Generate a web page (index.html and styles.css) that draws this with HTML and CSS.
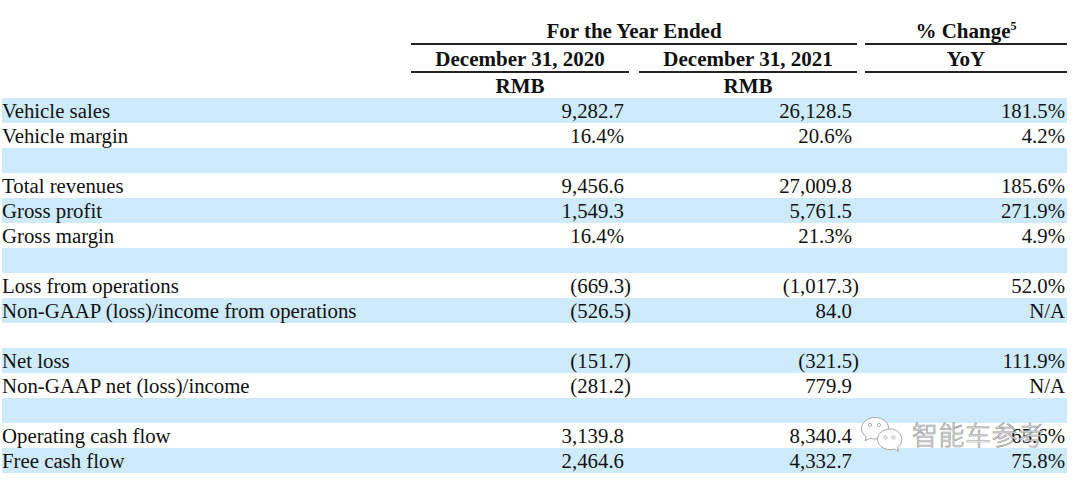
FILE: index.html
```html
<!DOCTYPE html>
<html>
<head>
<meta charset="utf-8">
<link rel="stylesheet" href="styles.css">
</head>
<body>
<div class="page">
  <div class="table">
    <div class="hrow h1">
      <div class="lab"></div>
      <div class="hc span2 ruled">For the Year Ended</div>
      <div class="gap2"></div>
      <div class="hc c3 ruled">% Change<sup>5</sup></div>
    </div>
    <div class="hrow h2">
      <div class="lab"></div>
      <div class="hc c1 ruled">December 31, 2020</div>
      <div class="gap1"></div>
      <div class="hc c2 ruled">December 31, 2021</div>
      <div class="gap2"></div>
      <div class="hc c3 ruled">YoY</div>
    </div>
    <div class="hrow h3">
      <div class="lab"></div>
      <div class="hc c1">RMB</div>
      <div class="gap1"></div>
      <div class="hc c2">RMB</div>
      <div class="gap2"></div>
      <div class="hc c3"></div>
    </div>
    <div class="rows">
      <div class="row"><div class="lab">Vehicle sales</div><div class="num c1">9,282.7</div><div class="gap1"></div><div class="num c2">26,128.5</div><div class="gap2"></div><div class="num c3">181.5%</div></div>
      <div class="row"><div class="lab">Vehicle margin</div><div class="num c1">16.4%</div><div class="gap1"></div><div class="num c2">20.6%</div><div class="gap2"></div><div class="num c3">4.2%</div></div>
      <div class="row"><div class="lab"></div></div>
      <div class="row"><div class="lab">Total revenues</div><div class="num c1">9,456.6</div><div class="gap1"></div><div class="num c2">27,009.8</div><div class="gap2"></div><div class="num c3">185.6%</div></div>
      <div class="row"><div class="lab">Gross profit</div><div class="num c1">1,549.3</div><div class="gap1"></div><div class="num c2">5,761.5</div><div class="gap2"></div><div class="num c3">271.9%</div></div>
      <div class="row"><div class="lab">Gross margin</div><div class="num c1">16.4%</div><div class="gap1"></div><div class="num c2">21.3%</div><div class="gap2"></div><div class="num c3">4.9%</div></div>
      <div class="row"><div class="lab"></div></div>
      <div class="row"><div class="lab">Loss from operations</div><div class="num c1">(669.3<span class="cp">)</span></div><div class="gap1"></div><div class="num c2">(1,017.3<span class="cp">)</span></div><div class="gap2"></div><div class="num c3">52.0%</div></div>
      <div class="row"><div class="lab">Non-GAAP (loss)/income from operations</div><div class="num c1">(526.5<span class="cp">)</span></div><div class="gap1"></div><div class="num c2">84.0</div><div class="gap2"></div><div class="num c3">N/A</div></div>
      <div class="row"><div class="lab"></div></div>
      <div class="row"><div class="lab">Net loss</div><div class="num c1">(151.7<span class="cp">)</span></div><div class="gap1"></div><div class="num c2">(321.5<span class="cp">)</span></div><div class="gap2"></div><div class="num c3">111.9%</div></div>
      <div class="row"><div class="lab">Non-GAAP net (loss)/income</div><div class="num c1">(281.2<span class="cp">)</span></div><div class="gap1"></div><div class="num c2">779.9</div><div class="gap2"></div><div class="num c3">N/A</div></div>
      <div class="row"><div class="lab"></div></div>
      <div class="row"><div class="lab">Operating cash flow</div><div class="num c1">3,139.8</div><div class="gap1"></div><div class="num c2">8,340.4</div><div class="gap2"></div><div class="num c3">65.6%</div></div>
      <div class="row"><div class="lab">Free cash flow</div><div class="num c1">2,464.6</div><div class="gap1"></div><div class="num c2">4,332.7</div><div class="gap2"></div><div class="num c3">75.8%</div></div>
    </div>
  </div>
  <div class="watermark">
    <svg class="wx" width="46" height="38" viewBox="0 0 46 38">
      <path d="M15 1.5C7.5 1.5 1.5 6.5 1.5 12.5c0 3.4 1.9 6.3 4.8 8.3l-1.3 4 4.8-2.5c1.6.5 3.3.7 5.2.7 7.5 0 13.5-5 13.5-11S22.5 1.5 15 1.5z" fill="#fff" stroke="#a8a8a8" stroke-width="1"/>
      <circle cx="10" cy="9" r="1.6" fill="none" stroke="#a8a8a8" stroke-width="0.9"/>
      <circle cx="19" cy="9" r="1.6" fill="none" stroke="#a8a8a8" stroke-width="0.9"/>
      <path d="M30 13c-7 0-12.5 4.6-12.5 10.3S23 33.6 30 33.6c1.5 0 3-.2 4.3-.6l4.2 2.3-1.1-3.6c2.7-1.9 4.4-4.7 4.4-8.1C41.8 17.6 36.8 13 30 13z" fill="#fff" stroke="#a8a8a8" stroke-width="1"/>
      <circle cx="25.5" cy="21.5" r="1.5" fill="none" stroke="#a8a8a8" stroke-width="0.9"/>
      <circle cx="33.5" cy="21.5" r="1.5" fill="none" stroke="#a8a8a8" stroke-width="0.9"/>
    </svg>
    <span class="wtext">智能车参考</span>
  </div>
</div>
</body>
</html>
```
FILE: styles.css
```css
html, body {
  margin: 0;
  padding: 0;
  background: #ffffff;
}
body {
  font-family: "Liberation Serif", "Times New Roman", serif;
  color: #111;
  width: 1080px;
  height: 484px;
  overflow: hidden;
}
.page {
  position: relative;
  width: 1080px;
  height: 484px;
}
.table {
  margin-left: 2px;
  width: 1065px;
}
.hrow, .row {
  display: flex;
}
.lab {
  width: 409px;
  flex: none;
  white-space: nowrap;
}
.c1, .c2 { width: 218px; flex: none; }
.c3 { width: 202px; flex: none; }
.gap1 { width: 10px; flex: none; }
.gap2 { width: 8px; flex: none; }
.span2 { width: 446px; flex: none; }
.hc {
  font-weight: bold;
  font-size: 21px;
  line-height: 24px;
  text-align: center;
  white-space: nowrap;
}
.ruled {
  border-bottom: 2px solid #222;
}
.h1 .hc { padding-top: 19px; }
.h2 .hc { padding-top: 2px; }
.h3 .hc { padding-top: 1px; height: 24px; }
.hc sup {
  font-size: 12px;
  line-height: 0;
  vertical-align: 8px;
}
.row {
  height: 25px;
  font-size: 20.8px;
  line-height: 25px;
}
.row:nth-child(odd) {
  background: #cdebfc;
}
.num {
  text-align: right;
  padding-right: 5px;
  box-sizing: border-box;
  white-space: nowrap;
}
.num.c3 {
  padding-right: 2px;
}
.cp {
  margin-right: -7px;
}
.watermark {
  position: absolute;
  left: 860px;
  top: 416px;
  display: flex;
  align-items: center;
  gap: 6px;
}
.wx {
  display: block;
}
.wtext {
  font-family: "Noto Sans CJK SC", sans-serif;
  font-weight: 300;
  font-size: 26px;
  line-height: 30px;
  color: rgba(255, 255, 255, 0.85);
  -webkit-text-stroke: 0.7px #9a9a9a;
  letter-spacing: 0.5px;
  margin-top: -2px;
}
```
